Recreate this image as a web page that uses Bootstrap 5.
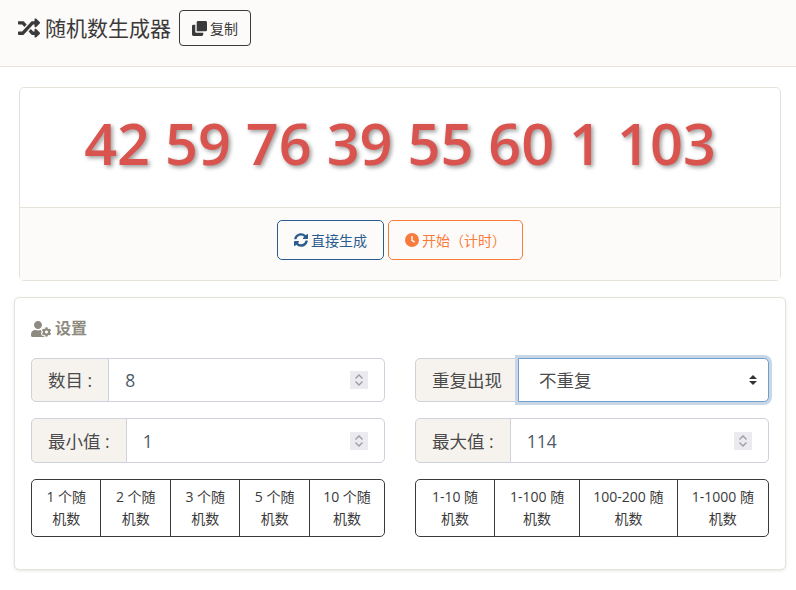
<!DOCTYPE html>
<html lang="zh">
<head>
<meta charset="utf-8">
<title>随机数生成器</title>
<link href="https://cdn.jsdelivr.net/npm/bootstrap@5.3.0/dist/css/bootstrap.min.css" rel="stylesheet">
<style>
html,body{height:590px;overflow:hidden}
body{background:#fff;color:#3a3a3a;font-family:"Open Sans","Noto Sans CJK SC",sans-serif;font-size:14px;line-height:1.6}
.top-bar{height:67px;background:#fdfbf9;border-bottom:1px solid #e9e3da;padding:10px 18px 0;gap:8px}
.top-title{font-size:21px;font-weight:400;line-height:36px;margin:0;color:#3a3a3a;display:flex;align-items:center;gap:5px}
.copy-btn{height:36px;width:72px;padding:0;font-size:14px;border-color:#3a3a3a;color:#3a3a3a;border-radius:4px;gap:3px}
.result-card{margin:20px 15px 0 19px;border-color:#e6e2da;border-radius:5px;height:194px}
.result-body{height:120px;padding:0;font-size:57.6px;font-weight:600;color:#d9534f;text-shadow:2px 2px 4px rgba(0,0,0,.4);line-height:110px;white-space:nowrap}
.result-foot{height:73px;background:#fdfbf9;border-top:1px solid #e6e2da;padding:12px 0 0;gap:4px}
.act-btn{height:40px;font-size:14px;padding:0;border-radius:5px;gap:3px}
.act-blue{width:107px;color:#2b5c8f;border-color:#2b5c8f}
.act-orange{width:135px;color:#f97b3c;border-color:#f97b3c}
.set-card{margin:16px 10px 0 14px;height:273px;border-color:#e6e2da;border-radius:5px;box-shadow:0 1px 3px rgba(0,0,0,.1);padding:16px}
.set-title{font-size:16px;font-weight:700;color:#8e8a80;height:30px;margin-bottom:14px;gap:4px}
.field-rows{display:grid;grid-template-columns:354px 354px;column-gap:30px}
.igroup{height:44px;margin-bottom:16px}
.igroup.tall{height:45px}
.igroup .input-group-text{background:#f6f3ef;border-color:#cdd2dc;color:#4a4a4a;font-size:17.5px;padding:0 16px;border-radius:5px 0 0 5px}
.igroup .form-control,.igroup .form-select{font-size:17.5px;color:#4f5a68;border-color:#cdd2dc;padding:0 16px;border-radius:0 5px 5px 0;background-color:#fff}
.igroup.tall .input-group-text,.igroup.tall .form-control{padding-top:2px}
.igroup input[type=number]{appearance:textfield;background-image:url("data:image/svg+xml,%3Csvg xmlns='http://www.w3.org/2000/svg' width='18' height='18'%3E%3Crect width='18' height='18' fill='%23ebebef'/%3E%3Cpath d='M5.500 7.500L9 4l3.500 3.500M5.500 10.500L9 14l3.500-3.500' fill='none' stroke='%239a9aa5' stroke-width='1.300'/%3E%3C/svg%3E");background-repeat:no-repeat;background-position:right 16px center;background-size:18px 18px}
.igroup input[type=number]::-webkit-inner-spin-button,.igroup input[type=number]::-webkit-outer-spin-button{-webkit-appearance:none;margin:0}
.igroup .form-select{padding-left:20px;border-color:#6d9fd0;box-shadow:0 0 0 3px #c8d6e6;color:#4a4a4a;position:relative;z-index:3;background-image:url("data:image/svg+xml,%3Csvg xmlns='http://www.w3.org/2000/svg' width='10' height='12'%3E%3Cpath d='M1 5L5 1l4 4zM1 7l4 4 4-4z' fill='%23333'/%3E%3C/svg%3E");background-position:right 10px center;background-size:10px 12px}
.pick-group{height:58px;width:100%}
.pick-group .btn{font-size:14px;line-height:22.4px;padding:5px 10.5px;color:#3a3a3a;border-color:#3a3a3a;border-radius:5px;background:#fff}
.pick-group .btn:not(:first-child){border-top-left-radius:0;border-bottom-left-radius:0}
.pick-group .btn:not(:last-child){border-top-right-radius:0;border-bottom-right-radius:0}
.w-a1{flex:0 0 71px}.w-a2{flex:0 0 70px}.w-a3{flex:0 0 71px}.w-a4{flex:0 0 70px}.w-a5{flex:1 1 auto}
.w-b1{flex:0 0 80px}.w-b2{flex:0 0 87px}.w-b3{flex:0 0 98px}.w-b4{flex:1 1 auto}
</style>
</head>
<body>
<header class="top-bar d-flex align-items-start">
  <h1 class="top-title">
    <svg width="22" height="22" viewBox="0 0 512 512" fill="#3a3a3a"><path d="M504.971 359.029c9.373 9.373 9.373 24.569 0 33.941l-80 79.984c-15.010 15.010-40.971 4.490-40.971-16.971V416h-58.785a12.004 12.004 0 0 1-8.773-3.812l-70.556-75.596 53.333-57.143L352 336h32v-39.981c0-21.438 25.943-31.998 40.971-16.971l80 79.981zM12 176h84l52.781 56.551 53.333-57.143-70.556-75.596A11.999 11.999 0 0 0 122.785 96H12c-6.627 0-12 5.373-12 12v56c0 6.627 5.373 12 12 12zm372 0v39.984c0 21.460 25.961 31.980 40.971 16.971l80-79.984c9.373-9.373 9.373-24.569 0-33.941l-80-79.981C409.943 24.021 384 34.582 384 56.019V96h-58.785a12.004 12.004 0 0 0-8.773 3.812L96 336H12c-6.627 0-12 5.373-12 12v56c0 6.627 5.373 12 12 12h110.785c3.326 0 6.503-1.381 8.773-3.812L352 176h32z"/></svg>
    随机数生成器
  </h1>
  <button type="button" class="btn copy-btn d-inline-flex align-items-center justify-content-center">
    <svg width="15" height="15" viewBox="0 0 16 16" fill="#3a3a3a"><path d="M5 1.500A1.500 1.500 0 0 1 6.500 0h8A1.500 1.500 0 0 1 16 1.500v8a1.500 1.500 0 0 1-1.500 1.500H5z"/><path d="M0 5.500A1.500 1.500 0 0 1 1.500 4H3.500v7.500a1 1 0 0 0 1 1H12v2a1.500 1.500 0 0 1-1.500 1.500h-9A1.500 1.500 0 0 1 0 14.500z"/></svg>
    复制
  </button>
</header>

<section class="card result-card">
  <div class="result-body text-center">42 59 76 39 55 60 1 103</div>
  <div class="result-foot d-flex justify-content-center">
    <button type="button" class="btn act-btn act-blue d-inline-flex align-items-center justify-content-center">
      <svg width="14" height="14" viewBox="0 0 512 512" fill="#2b5c8f"><path d="M370 133c-31-29-72-45-114-45-78 0-145 54-162 128-2 7-8 12-15 12H22c-10 0-17-9-16-18C28 95 132 8 256 8c69 0 131 27 177 71l37-37c15-15 42-5 42 17v139c0 13-11 24-24 24H349c-21 0-32-26-17-41zM24 288h139c21 0 32 26 17 41l-38 38c31 29 72 45 114 45 78 0 145-54 162-128 2-7 8-12 15-12h57c10 0 17 9 16 18C484 417 380 504 256 504c-69 0-131-27-177-71l-37 37c-15 15-42 5-42-17V312c0-13 11-24 24-24z"/></svg>
      直接生成
    </button>
    <button type="button" class="btn act-btn act-orange d-inline-flex align-items-center justify-content-center">
      <svg width="14" height="14" viewBox="0 0 16 16"><circle cx="8" cy="8" r="8" fill="#f97b3c"/><path d="M8 3.500V8.500L11 10.500" fill="none" stroke="#fff" stroke-width="1.600"/></svg>
      开始（计时）
    </button>
  </div>
</section>

<section class="card set-card">
  <div class="set-title d-flex align-items-center">
    <svg width="20" height="16" viewBox="0 0 640 512" fill="#8e8a80"><path d="M610.500 373.300c2.600-14.100 2.600-28.500 0-42.600l25.800-14.900c3-1.700 4.300-5.200 3.300-8.500-6.700-21.600-18.200-41.200-33.200-57.400-2.300-2.500-6-3.100-9-1.400l-25.800 14.900c-10.900-9.300-23.400-16.500-36.900-21.300v-29.800c0-3.400-2.400-6.400-5.700-7.100-22.300-5-45-4.800-66.200 0-3.300.7-5.700 3.700-5.700 7.100v29.800c-13.500 4.800-26 12-36.900 21.300l-25.800-14.900c-2.900-1.700-6.700-1.100-9 1.400-15 16.200-26.500 35.800-33.200 57.400-1 3.300.4 6.800 3.300 8.500l25.800 14.900c-2.600 14.100-2.600 28.500 0 42.600l-25.800 14.900c-3 1.700-4.300 5.200-3.300 8.500 6.700 21.600 18.200 41.100 33.200 57.400 2.300 2.500 6 3.100 9 1.400l25.800-14.900c10.900 9.300 23.400 16.500 36.900 21.300v29.800c0 3.400 2.400 6.400 5.700 7.100 22.300 5 45 4.800 66.200 0 3.300-.7 5.700-3.700 5.700-7.100v-29.800c13.500-4.800 26-12 36.900-21.300l25.800 14.900c2.900 1.700 6.700 1.100 9-1.400 15-16.200 26.500-35.800 33.200-57.400 1-3.300-.4-6.800-3.300-8.500l-25.800-14.900zM496 400.500c-26.800 0-48.500-21.800-48.500-48.500s21.800-48.500 48.500-48.500 48.500 21.800 48.500 48.500-21.700 48.500-48.500 48.500zM224 256c70.700 0 128-57.300 128-128S294.700 0 224 0 96 57.300 96 128s57.300 128 128 128zm201.200 226.500c-2.300-1.200-4.600-2.600-6.800-3.900l-7.900 4.600c-6 3.400-12.800 5.300-19.600 5.300-10.900 0-21.400-4.600-28.900-12.600-18.300-19.800-32.300-43.900-40.200-69.600-5.500-17.700 1.900-36.400 17.900-45.700l7.900-4.600c-.1-2.600-.1-5.200 0-7.800l-7.900-4.600c-16-9.200-23.400-28-17.900-45.700.9-2.900 2.200-5.800 3.200-8.700-3.800-.3-7.500-1.200-11.400-1.200h-16.700c-22.200 10.200-46.900 16-72.900 16s-50.600-5.800-72.900-16h-16.700C60.200 288 0 348.200 0 422.400V464c0 26.500 21.500 48 48 48h352c10.100 0 19.500-3.200 27.200-8.500-1.200-3.800-2-7.700-2-11.800v-9.200z"/></svg>
    设置
  </div>
  <div class="field-rows">
    <div class="input-group igroup"><span class="input-group-text">数目 :</span><input class="form-control" type="number" value="8"></div>
    <div class="input-group igroup"><span class="input-group-text">重复出现</span><select class="form-select"><option>不重复</option></select></div>
    <div class="input-group igroup tall"><span class="input-group-text">最小值 :</span><input class="form-control" type="number" value="1"></div>
    <div class="input-group igroup tall"><span class="input-group-text">最大值 :</span><input class="form-control" type="number" value="114"></div>
    <div class="btn-group pick-group" role="group">
      <button type="button" class="btn w-a1">1 个随机数</button>
      <button type="button" class="btn w-a2">2 个随机数</button>
      <button type="button" class="btn w-a3">3 个随机数</button>
      <button type="button" class="btn w-a4">5 个随机数</button>
      <button type="button" class="btn w-a5">10 个随机数</button>
    </div>
    <div class="btn-group pick-group" role="group">
      <button type="button" class="btn w-b1">1-10 随机数</button>
      <button type="button" class="btn w-b2">1-100 随机数</button>
      <button type="button" class="btn w-b3">100-200 随机数</button>
      <button type="button" class="btn w-b4">1-1000 随机数</button>
    </div>
  </div>
</section>
<script src="https://cdn.jsdelivr.net/npm/bootstrap@5.3.0/dist/js/bootstrap.bundle.min.js"></script>
</body>
</html>
